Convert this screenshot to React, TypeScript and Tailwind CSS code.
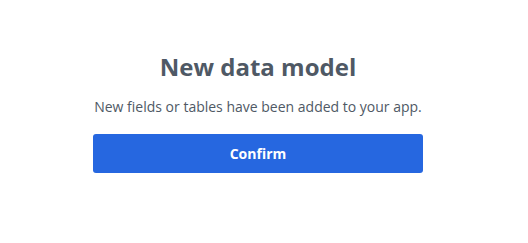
export default function App() {
  return (
    <div className="w-[528px] h-[243px] bg-white pr-3 flex justify-center" style={{ fontFamily: '"Open Sans", sans-serif' }}>
      <div className="w-[330px] pt-[50px] flex flex-col items-center">
        <h1 className="text-[24px] leading-[34px] font-bold text-[#4f5965]">New data model</h1>
        <p className="mt-[13px] text-[14px] leading-[20px] text-[#4f5965]">New fields or tables have been added to your app.</p>
        <button className="mt-[17px] w-full h-[39px] rounded-[3px] bg-[#2667e0] text-white text-[14px] font-bold">
          Confirm
        </button>
      </div>
    </div>
  );
}
